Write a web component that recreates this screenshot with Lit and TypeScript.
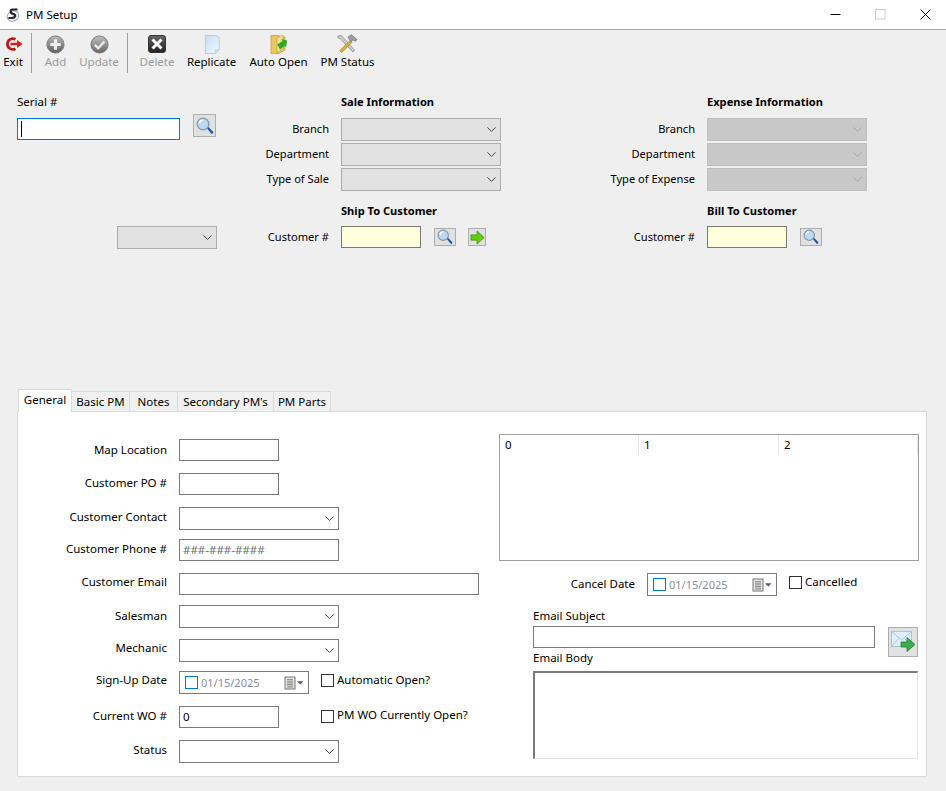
import { LitElement, html, css, svg } from "lit";
import { customElement } from "lit/decorators.js";

const chevron = html`<svg class="chev" width="9" height="5" viewBox="0 0 9 5"><path d="M.4.400 4.500 4.400 8.600.4" fill="none" stroke="currentColor" stroke-width="1"/></svg>`;

const grad = (id: string, a: string, b: string) => svg`<linearGradient id=${id} x1="0" y1="0" x2="0" y2="1"><stop offset="0" stop-color=${a}/><stop offset="1" stop-color=${b}/></linearGradient>`;

const icons: Record<string, unknown> = {
  exit: html`<svg width="19" height="18" viewBox="0 0 19 18"><path d="M11.500 4.300A5.400 5.400 0 1 0 11.500 13.700" fill="none" stroke="#c01818" stroke-width="2.800"/><path d="M6.500 7.700h6.500V5l5.500 4-5.500 4v-2.700H6.500z" fill="#d02020"/></svg>`,
  add: html`<svg width="19" height="19" viewBox="0 0 20 20"><defs>${grad("ga", "#b8b8b8", "#5c5c5c")}</defs><circle cx="10" cy="10" r="9" fill="url(#ga)" stroke="#777"/><path d="M8.300 4.500h3.400v3.800h3.800v3.400h-3.800v3.800H8.300v-3.800H4.500V8.300h3.800z" fill="#eee"/></svg>`,
  update: html`<svg width="19" height="19" viewBox="0 0 20 20"><defs>${grad("gu", "#c0c0c0", "#666")}</defs><circle cx="10" cy="10" r="9" fill="url(#gu)" stroke="#777"/><path d="M5 10.500 8.600 14l6.400-7" fill="none" stroke="#e8e8e8" stroke-width="2.600"/></svg>`,
  del: html`<svg width="18" height="18" viewBox="0 0 18 18"><defs>${grad("gd", "#666", "#222")}</defs><rect x=".5" y=".5" width="17" height="17" rx="2.500" fill="url(#gd)" stroke="#333"/><path d="M4.500 4.500l9 9m0-9-9 9" stroke="#fff" stroke-width="3"/></svg>`,
  rep: html`<svg width="18" height="19" viewBox="0 0 18 20"><defs><linearGradient id="gr" x1="0" y1="0" x2="1" y2="1"><stop offset="0" stop-color="#c4ddf5"/><stop offset="1" stop-color="#f4f8fc"/></linearGradient></defs><path d="M2 .5h11.500L16.500 3v12.500l-4 4H2z" fill="url(#gr)" stroke="#bcc8d4"/><path d="M16.500 15.500h-4v4z" fill="#d8dfe6" stroke="#bcc8d4" stroke-width=".6"/></svg>`,
  open: html`<svg width="18" height="20" viewBox="0 0 18 20"><path d="M1 1.500h8l.8 1.500H15V16l-6 3.500H1z" fill="#e6c860" stroke="#b89a3c" stroke-width=".7"/><path d="M7 3.500 13 1v13.500l-6 4.500z" fill="#f2e08e" stroke="#b89a3c" stroke-width=".6"/><path d="M17 6.500 11.500 5l1 2-5.200 3.500 2.700 5 5-4 1.200 2z" fill="#2ea82a"/></svg>`,
  status: html`<svg width="21" height="20" viewBox="0 0 22 21"><path d="M4.500 1.500 18.500 17l-1.800 1.800L2.800 4.500l-1.800-.5L.8 2.200z" fill="#c8ccd0" stroke="#7c8288" stroke-width=".7"/><path d="M14 6.500 3 17.500l1.800 2L16 8.500z" fill="#e0b030" stroke="#a07818" stroke-width=".7"/><path d="M11.500 3.500 15 .8l6 5-1.500 1.800-3-1.200-2 1.800z" fill="#9aa0a6" stroke="#666c72" stroke-width=".7"/></svg>`,
};

const search = html`<svg class="mag" width="18" height="18" viewBox="0 0 18 18"><path d="m10.500 10.800 1.500-1.400 5 5.300a1.200 1.200 0 0 1-1.800 1.700z" fill="#1f56a8"/><circle cx="7" cy="7" r="5.800" fill="#bcd8f4" stroke="#8496aa" stroke-width="1.300"/><path d="M3.500 6.500a3.300 3.300 0 0 1 3.300-3.300" fill="none" stroke="#fff" stroke-width="1.600"/></svg>`;

const goArrow = html`<svg width="15" height="15" viewBox="0 0 16 16"><path d="M1 5.200h6.500V1L15 8l-7.500 7v-4.200H1z" fill="#5fd000" stroke="#3c8c10" stroke-width=".8"/></svg>`;

const mail = html`<svg width="25" height="22" viewBox="0 0 25 22"><rect x=".5" y=".5" width="20" height="15" fill="#e0edfb" stroke="#a8c4e4"/><path d="M.5.500 10.500 9l10-8.500M.5 15.500l7-8m13 8-7-8" fill="none" stroke="#a8c4e4"/><path d="M10 11h6V6.500l8 7-8 7V16h-6z" fill="#3bb04a" stroke="#1f7f35" stroke-width=".8"/></svg>`;

const calendar = html`<svg class="cal" width="20" height="14" viewBox="0 0 20 14"><rect x="1" y="1" width="10" height="12" fill="#e4e4e4" stroke="#777"/><path d="M3 3.500h6M3 6h6M3 8.500h6M3 11h6M4 3v8.500M6 3v8.500M8 3v8.500" stroke="#8c8c8c" stroke-width=".8"/><path d="M13 5.200h6.500l-3.200 3.400z" fill="#465a78"/></svg>`;

function select(cls = "") {
  return html`<div class="ctl sel ${cls}">${chevron}</div>`;
}
function dateBox() {
  return html`<div class="date"><span class="dcheck"></span><span class="dtext">01/15/2025</span>${calendar}</div>`;
}
function check(text: string, cls = "") {
  return html`<div class="check ${cls}"><span class="box"></span><span class="tx">${text}</span></div>`;
}

@customElement("app-root")
export class AppRoot extends LitElement {
  static styles = css`
    :host {
      display: block;
      width: 946px;
      height: 791px;
      overflow: hidden;
      background: #efefef;
      color: #000;
      font-family: "Noto Sans", sans-serif;
      font-size: 11.5px;
      line-height: 16px;
    }
    * { box-sizing: border-box; }
    .title {
      height: 30px;
      background: #fff;
      border-bottom: 1px solid #a9a9a9;
      display: flex;
      align-items: center;
      padding-left: 6px;
    }
    .title .name { margin-left: 5px; }
    .winbtns { margin-left: auto; margin-right: -2px; display: flex; }
    .winbtn { width: 45px; height: 29px; display: flex; align-items: center; justify-content: center; }
    .toolbar {
      height: 65px;
      display: flex;
      align-items: flex-start;
      padding: 3px 0 0 4px;
      gap: 13px;
    }
    .tool {
      display: flex;
      flex-direction: column;
      align-items: center;
      height: 40px;
    }
    .tool.nudge { margin-left: 1px; }
    .tool .ic { height: 21px; padding-top: 1px; display: flex; align-items: center; justify-content: center; }
    .tool .lb { white-space: nowrap; }
    .tool.off .lb { color: #9b9b9b; }
    .sep { width: 1px; height: 40px; background: #a0a0a0; margin-left: -4px; }

    .top {
      display: grid;
      margin-left: 17px;
      grid-template-columns: 200px 124px 160px 206px 160px;
      grid-template-rows: 23px 25px 25px 25px 33px 23px;
      align-items: start;
    }
    .lab { text-align: right; padding-right: 12px; padding-top: 3px; white-space: nowrap; }
    .top .lab { font-size: 11.1px; }
    .up1 { padding-top: 2px; }
    .up2 { padding-top: 1px; }
    .head { font-weight: 700; font-size: 11.1px; white-space: nowrap; }
    .r1 { grid-row: 1; margin-top: -1px; }
    .r6 { grid-row: 6; }
    .r5 { grid-row: 5; align-self: end; padding-bottom: 7px; }
    .c1 { grid-column: 1; } .c2 { grid-column: 2; } .c3 { grid-column: 3; } .c4 { grid-column: 4; } .c5 { grid-column: 5; }

    .ctl { height: 22px; border: 1px solid #7a7a7a; background: #fff; }
    .sel { height: 23px; display: flex; align-items: center; justify-content: flex-end; padding-right: 4px; color: #444; }
    .dis { background: #e1e1e1; border-color: #adadad; color: #444; }
    .dis2 { background: #c8c8c8; border-color: #bfbfbf; color: #a8a8a8; }
    .serial-row { display: flex; align-items: flex-start; gap: 13px; }
    .serial { width: 163px; border-color: #0078d7; padding: 2px 3px; }
    .caret { display: block; width: 1px; height: 16px; background: #000; }
    .ib {
      width: 23px; height: 23px;
      border: 1px solid #adadad;
      background: #e1e1e1;
      display: flex; align-items: center; justify-content: center;
    }
    .ib.up { margin-top: -4px; }
    .cust { display: flex; align-items: flex-start; }
    .yellow { width: 80px; background: #ffffdd; }
    .cust .ib { width: 22px; height: 18px; margin-left: 13px; margin-top: 2px; }
    .cust .ib .mag { width: 16px; height: 16px; }
    .cust .ib.go { width: 18px; margin-left: 12px; }
    .small { width: 100px; justify-self: end; }

    .tabs { display: flex; align-items: flex-end; height: 23px; margin: 139px 0 0 18px; position: relative; z-index: 1; }
    .tab {
      height: 20px;
      padding: 2px 0 0;
      background: #f0f0f0;
      border: 1px solid #d9d9d9;
      border-left: none;
      border-bottom: none;
      white-space: nowrap;
      text-align: center;
    }
    .tab.on {
      height: 23px;
      background: #fff;
      border-left: 1px solid #d9d9d9;
      margin-bottom: -1px;
    }
    .panel {
      margin-left: 17px;
      width: 910px;
      height: 366px;
      background: #fff;
      border: 1px solid #d9d9d9;
      display: flex;
      align-items: flex-start;
    }
    .left {
      width: 481px;
      padding-top: 27px;
      display: grid;
      grid-template-columns: 161px 1fr;
      grid-template-rows: 34px 34px 32px 34px 32px 34px 32px 35px 34px 23px;
      align-items: start;
    }
    .w100 { width: 100px; }
    .w160 { width: 160px; }
    .w300 { width: 300px; }
    .phone { padding: 2px 3px; color: #6d6d6d; }
    .val { padding: 2px 3px; }
    .pair { display: flex; align-items: flex-start; gap: 12px; }
    .pair.wide { gap: 42px; }
    .date {
      width: 130px; height: 23px;
      border: 1px solid #7a7a7a;
      background: #fff;
      display: flex; align-items: center;
      padding-left: 5px;
    }
    .dcheck { flex: none; width: 13px; height: 13px; border: 1px solid #0078d7; background: #fff; }
    .dtext { margin-left: 3px; font-size: 11px; color: #87909f; }
    .cal { margin-left: auto; margin-right: 4px; }
    .check { display: flex; align-items: center; gap: 3px; white-space: nowrap; }
    .box { width: 13px; height: 13px; border: 1px solid #333; background: #fff; display: block; }
    .check.t3 { margin-top: 1px; }
    .check.t5 { margin-top: 3px; }
    .check.t5 .tx { margin-top: -2px; }

    .right { padding-top: 22px; width: 420px; }
    .list { width: 420px; height: 127px; border: 1px solid #a0a0a0; background: #fff; }
    .lhead { display: grid; grid-template-columns: 139px 140px 139px; height: 20px; }
    .lhead span { padding: 2px 0 0 5px; border-right: 1px solid #e5e5e5; }
    .cancel { display: flex; align-items: flex-start; margin-top: 12px; height: 23px; }
    .cancel .lab { width: 148px; }
    .cancel .check { margin: 1px 0 0 12px; }
    .mailbox {
      margin: 13px 0 0 34px;
      display: grid;
      grid-template-columns: 342px 13px 30px;
      grid-template-rows: 17px 22px 23px 88px;
      align-items: start;
    }
    .m-sub { grid-column: 1; grid-row: 1; white-space: nowrap; margin-top: -1px; }
    .m-in { grid-column: 1; grid-row: 2; }
    .m-body { grid-column: 1; grid-row: 3; padding-top: 2px; white-space: nowrap; }
    .m-btn {
      grid-column: 3; grid-row: 2 / 4;
      width: 30px; height: 30px; margin-top: 1px;
      border: 1px solid #adadad; background: #e1e1e1;
      display: flex; align-items: center; justify-content: center;
    }
    .m-area {
      grid-column: 1 / 4; grid-row: 4;
      height: 88px;
      background: #fff;
      border-style: solid;
      border-color: #7a7a7a #e3e3e3 #e3e3e3 #7a7a7a;
      border-width: 2px 1px 1px 2px;
    }
  `;

  render() {
    const tools = [
      ["exit", "Exit", "", 18],
      ["sep"],
      ["add", "Add", "off", 21],
      ["update", "Update", "off nudge", 38],
      ["sep"],
      ["del", "Delete", "off", 32],
      ["rep", "Replicate", "nudge", 49],
      ["open", "Auto Open", "", 59],
      ["status", "PM Status", "", 53],
    ] as [string, string?, string?, number?][];
    const tabs: [string, number][] = [
      ["Basic PM", 58],
      ["Notes", 48],
      ["Secondary PM's", 96],
      ["PM Parts", 57],
    ];
    return html`
      <div class="title">
        <svg width="15" height="16" viewBox="0 0 15 16"><ellipse cx="7" cy="9" rx="6" ry="5" transform="rotate(-25 7 9)" fill="none" stroke="#8a9ad8" stroke-width=".9"/><path d="M11.500 2.500H6.800Q4.500 2.500 4.800 4.800 5 6.500 7.500 7 9.500 7.600 9 9.400 8.500 11 6 11H2.500" fill="none" stroke="#222" stroke-width="2.200"/></svg>
        <span class="name">PM Setup</span>
        <div class="winbtns">
          <div class="winbtn"><svg width="11" height="11" viewBox="0 0 11 11"><path d="M.5 5.500h10" stroke="#000" stroke-width="1"/></svg></div>
          <div class="winbtn"><svg width="11" height="11" viewBox="0 0 11 11"><rect x=".5" y=".5" width="9.500" height="9.500" fill="none" stroke="#ccc"/></svg></div>
          <div class="winbtn"><svg width="11" height="11" viewBox="0 0 11 11"><path d="M.5.500l10 10m0-10-10 10" stroke="#000" stroke-width="1"/></svg></div>
        </div>
      </div>
      <div class="toolbar">
        ${tools.map((t) =>
          t[0] === "sep"
            ? html`<div class="sep"></div>`
            : html`<div class="tool ${t[2]}" style="width:${t[3]}px"><div class="ic">${icons[t[0]]}</div><div class="lb">${t[1]}</div></div>`
        )}
      </div>

      <div class="top">
        <div class="c1 r1">Serial #</div>
        <div class="c1 serial-row">
          <div class="ctl serial"><span class="caret"></span></div>
          <div class="ib up">${search}</div>
        </div>
        <div class="c3 r1 head">Sale Information</div>
        <div class="c5 r1 head">Expense Information</div>

        <div class="c2 lab">Branch</div>
        <div class="c3">${select("dis")}</div>
        <div class="c4 lab">Branch</div>
        <div class="c5">${select("dis2")}</div>

        <div class="c2 lab">Department</div>
        <div class="c3">${select("dis")}</div>
        <div class="c4 lab">Department</div>
        <div class="c5">${select("dis2")}</div>

        <div class="c2 lab">Type of Sale</div>
        <div class="c3">${select("dis")}</div>
        <div class="c4 lab">Type of Expense</div>
        <div class="c5">${select("dis2")}</div>

        <div class="c3 r5 head">Ship To Customer</div>
        <div class="c5 r5 head">Bill To Customer</div>

        <div class="c1 r6 small">${select("dis")}</div>
        <div class="c2 r6 lab">Customer #</div>
        <div class="c3 r6 cust"><div class="ctl yellow"></div><div class="ib">${search}</div><div class="ib go">${goArrow}</div></div>
        <div class="c4 r6 lab">Customer #</div>
        <div class="c5 r6 cust"><div class="ctl yellow"></div><div class="ib">${search}</div></div>
      </div>

      <div class="tabs">
        <div class="tab on" style="width:54px">General</div>
        ${tabs.map(([t, w]) => html`<div class="tab" style="width:${w}px">${t}</div>`)}
      </div>
      <div class="panel">
        <div class="left">
          <div class="lab">Map Location</div><div class="ctl w100"></div>
          <div class="lab up1">Customer PO #</div><div class="ctl w100"></div>
          <div class="lab up1">Customer Contact</div>${select("w160")}
          <div class="lab up1">Customer Phone #</div><div class="ctl w160 phone">###-###-####</div>
          <div class="lab up2">Customer Email</div><div class="ctl w300"></div>
          <div class="lab">Salesman</div>${select("w160")}
          <div class="lab up2">Mechanic</div>${select("w160")}
          <div class="lab up2">Sign-Up Date</div><div class="pair">${dateBox()}${check("Automatic Open?", "t3")}</div>
          <div class="lab up1">Current WO #</div><div class="pair wide"><div class="ctl w100 val">0</div>${check("PM WO Currently Open?", "t5")}</div>
          <div class="lab up1">Status</div>${select("w160")}
        </div>
        <div class="right">
          <div class="list"><div class="lhead"><span>0</span><span>1</span><span>2</span></div></div>
          <div class="cancel"><div class="lab">Cancel Date</div>${dateBox()}${check("Cancelled")}</div>
          <div class="mailbox">
            <div class="m-sub">Email Subject</div>
            <div class="ctl m-in"></div>
            <div class="m-body">Email Body</div>
            <div class="m-btn">${mail}</div>
            <div class="m-area"></div>
          </div>
        </div>
      </div>
    `;
  }
}
